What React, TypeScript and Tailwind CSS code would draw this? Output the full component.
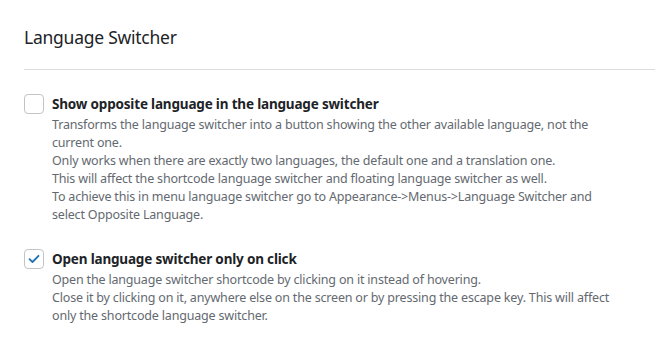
import React from "react";

function Check({ checked }: { checked?: boolean }) {
  return (
    <div className="w-[20px] h-[20px] shrink-0 rounded-[4px] border border-[#c3c4c7] bg-white flex items-center justify-center mt-[1px]">
      {checked && (
        <svg width="12" height="10" viewBox="0 0 12 10" fill="none">
          <path d="M1.5 5.2 L4.5 8 L10.5 1.8" stroke="#2271b1" strokeWidth="1.8" strokeLinecap="round" strokeLinejoin="round" />
        </svg>
      )}
    </div>
  );
}

function Option({ checked, title, lines }: { checked?: boolean; title: string; lines: string[] }) {
  return (
    <div className="flex gap-[8px]">
      <Check checked={checked} />
      <div className="flex flex-col">
        <div className="text-[13.5px] leading-[23px] font-bold tracking-[-0.18px] text-[#1d2327]">{title}</div>
        <div className="text-[12.5px] leading-[18px] tracking-[-0.18px] text-[#646970]">
          {lines.map((l, i) => (
            <div key={i}>{l}</div>
          ))}
        </div>
      </div>
    </div>
  );
}

export default function App() {
  return (
    <div className="w-[655px] h-[354px] bg-white overflow-hidden pl-[24px]" style={{ fontFamily: '"Noto Sans", "Open Sans", sans-serif' }}>
      <div className="pt-[25px] pb-[19px] text-[17.5px] leading-[25px] tracking-[-0.25px] text-[#1d2327]">Language Switcher</div>
      <div className="h-px bg-[#dcdcde]" />
      <div className="pt-[23px] flex flex-col gap-[24px]">
        <Option
          title="Show opposite language in the language switcher"
          lines={[
            "Transforms the language switcher into a button showing the other available language, not the",
            "current one.",
            "Only works when there are exactly two languages, the default one and a translation one.",
            "This will affect the shortcode language switcher and floating language switcher as well.",
            "To achieve this in menu language switcher go to Appearance->Menus->Language Switcher and",
            "select Opposite Language.",
          ]}
        />
        <Option
          checked
          title="Open language switcher only on click"
          lines={[
            "Open the language switcher shortcode by clicking on it instead of hovering.",
            "Close it by clicking on it, anywhere else on the screen or by pressing the escape key. This will affect",
            "only the shortcode language switcher.",
          ]}
        />
      </div>
    </div>
  );
}
